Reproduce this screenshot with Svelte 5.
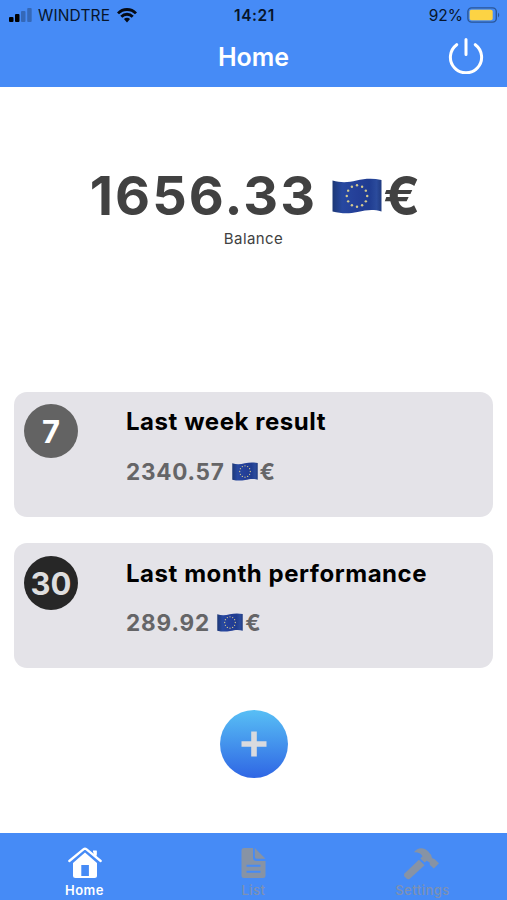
<script lang="ts">
	interface IResult {
		badge: string;
		title: string;
		amount: string;
		dark: boolean;
	}

	const balance = '1656.33';
	const results: IResult[] = [
		{ badge: '7', title: 'Last week result', amount: '2340.57', dark: false },
		{ badge: '30', title: 'Last month performance', amount: '289.92', dark: true },
	];
	const stars = Array.from({ length: 12 }, (_, i) => ({
		x: 24.5 + 10 * Math.sin((i * Math.PI) / 6),
		y: 18 - 10.7 * Math.cos((i * Math.PI) / 6),
	}));
</script>

{#snippet flag()}
	<svg class="flag" viewBox="0 0 49 36" preserveAspectRatio="none">
		<defs>
			<linearGradient id="cloth" x1="0" y1="0" x2="1" y2="0">
				<stop offset="0" stop-color="#1d3876" />
				<stop offset="0.2" stop-color="#2748a0" />
				<stop offset="0.5" stop-color="#243f98" />
				<stop offset="0.75" stop-color="#1f3c90" />
				<stop offset="0.9" stop-color="#2b4b9c" />
				<stop offset="1" stop-color="#203b80" />
			</linearGradient>
		</defs>
		<path
			d="M0.500 2.500C9 5 16 4.500 24 2.500S40 0 48.500 2V33.500C40 31 34 32 25 34S9 35.500 0.500 33.500Z"
			fill="url(#cloth)"
		/>
		{#each stars as star}
			<circle cx={star.x} cy={star.y} r="1.2" fill="#d3c98e" />
		{/each}
	</svg>
{/snippet}

<div class="app">
	<header>
		<div class="status">
			<div class="carrier">
				<svg class="signal" width="23" height="14" viewBox="0 0 23 14">
					<rect x="0" y="9" width="4.500" height="5" rx="1" />
					<rect x="6" y="6" width="4.500" height="8" rx="1" />
					<rect x="12" y="3" width="4.500" height="11" rx="1" opacity="0.25" />
					<rect x="18.200" y="0" width="4.500" height="14" rx="1" opacity="0.25" />
				</svg>
				<span>WINDTRE</span>
				<svg class="wifi" width="20" height="15" viewBox="0 0 20 15">
					<g fill="none" stroke="#050a14" stroke-width="2.800">
						<path d="M1 5.400C6 .2 14 .2 19 5.400" />
						<path d="M4.300 8.800C7.500 5.400 12.500 5.400 15.700 8.800" />
					</g>
					<path d="M6.900 11.100Q10 8.400 13.100 11.100L10 14.500Z" fill="#050a14" />
				</svg>
			</div>
			<span class="time">14:21</span>
			<div class="battery">
				<span>92%</span>
				<svg width="33" height="16" viewBox="0 0 33 16">
					<rect x="0.900" y="0.900" width="28.400" height="14.200" rx="3.700" fill="none" stroke="#2a5697" stroke-width="1.400" />
					<rect x="2.700" y="2.700" width="23" height="10.600" rx="1.800" fill="#fcd344" />
					<path d="M31 5.500Q33.500 8 31 10.500Z" fill="#2a5697" />
				</svg>
			</div>
		</div>
		<div class="title">
			<h1>Home</h1>
			<button class="power" aria-label="Log out">
				<svg width="36" height="36" viewBox="0 0 36 36">
					<path
						d="M8.700 6.700A15.600 15.600 0 1 0 27.300 6.700M18 1.500V16.500"
						fill="none"
						stroke="#fff"
						stroke-width="3"
						stroke-linecap="round"
					/>
				</svg>
			</button>
		</div>
	</header>

	<main>
		<section class="balance">
			<div class="total">
				<span>{balance}</span>{@render flag()}<span class="euro">€</span>
			</div>
			<p>Balance</p>
		</section>

		{#each results as result}
			<div class="card" class:dark={result.dark}>
				<div class="badge">{result.badge}</div>
				<div class="content">
					<h2>{result.title}</h2>
					<div class="amount">
						<span>{result.amount}</span>{@render flag()}<span class="euro">€</span>
					</div>
				</div>
			</div>
		{/each}

		<button class="add" aria-label="Add">
			<svg width="26" height="26" viewBox="0 0 26 26">
				<path d="M13 0.500V25.500M0.500 13H25.500" stroke="#d9dade" stroke-width="5.600" />
			</svg>
		</button>
	</main>

	<nav>
		<div class="tab active">
			<svg width="36" height="32" viewBox="0 0 36 32">
				<path d="M6 16L18 5.500L30 16V28.500Q30 31 27.500 31H8.500Q6 31 6 28.500Z" fill="#fff" />
				<path d="M26 3.500H29.700V12L26 9Z" fill="#fff" />
				<path
					d="M2.300 14.500L16.700 2.200Q18 1.200 19.300 2.200L33.700 14.500"
					fill="none"
					stroke="#468bf6"
					stroke-width="4.600"
				/>
				<path
					d="M2.300 14L16.700 2.200Q18 1.200 19.300 2.200L33.700 14"
					fill="none"
					stroke="#fff"
					stroke-width="2.300"
					stroke-linecap="round"
				/>
				<path d="M26.500 4H29.500V10L26.500 8Z" fill="#fff" />
				<rect x="14.300" y="18" width="7.600" height="11" fill="#468bf6" />
			</svg>
			<span>Home</span>
		</div>
		<div class="tab">
			<svg width="36" height="32" viewBox="0 0 36 32">
				<path d="M8 1H17V10.500Q17 14 20.500 14H29.500V28.500Q29.500 31 27 31H8Q5.500 31 5.500 28.500V3.500Q5.500 1 8 1Z" />
				<path d="M18.800 1L29.500 11.700H21Q18.800 11.700 18.800 9.500Z" />
				<path d="M10.500 18.700H24.500M10.500 24.700H24.500" stroke="#468bf6" stroke-width="2" />
			</svg>
			<span>List</span>
		</div>
		<div class="tab">
			<svg class="hammer" width="36" height="32" viewBox="0 0 36 32">
				<path d="M11 5.200C14.500 .2 21 .2 25 4.300L28.200 8Q28.500 10.500 29.300 11.200L31.500 12L36 16.300L30.800 21.500L26.700 17.700V15.400L23.700 13.800L21.700 15.500L17.300 11.400L19.500 9.200Q17 4.800 11 5.200Z" />
				<path d="M15.900 12.800L21.500 18.300L6.800 31.700Q5 33 3.500 31.500L1.500 29.500Q.2 28 1.500 26.500Z" />
			</svg>
			<span>Settings</span>
		</div>
	</nav>
</div>

<style>
	:global(body) {
		margin: 0;
		background-color: #fff;
	}
	.app {
		display: flex;
		flex-direction: column;
		width: 507px;
		height: 900px;
		overflow: hidden;
		font-family: Inter, 'Liberation Sans', sans-serif;
	}
	header {
		height: 87px;
		background-color: #468bf6;
	}
	.status {
		display: grid;
		grid-template-columns: 1fr auto 1fr;
		align-items: center;
		height: 30px;
		padding: 0 7px 0 9px;
		color: #07152b;
		font-size: 15.5px;
		line-height: 28px;
	}
	.status span {
		padding-top: 1px;
	}
	.carrier {
		display: flex;
		align-items: center;
	}
	.carrier span {
		margin: 0 7px 0 6px;
		letter-spacing: 0.15px;
	}
	.time {
		font-weight: 600;
		letter-spacing: 0.6px;
	}
	.battery {
		display: flex;
		justify-content: flex-end;
		align-items: center;
		gap: 4px;
	}
	.title {
		display: grid;
		grid-template-columns: 1fr auto 1fr;
		align-items: center;
		height: 53px;
		padding: 0 23px;
		color: #fff;
	}
	h1 {
		grid-column: 2;
		margin: 0;
		font-size: 25px;
		font-weight: 600;
	}
	button {
		display: flex;
		justify-content: center;
		align-items: center;
		padding: 0;
		border: none;
		background: none;
	}
	.power {
		justify-self: end;
		margin-bottom: 1px;
	}
	main {
		display: flex;
		flex-direction: column;
		align-items: center;
		flex: 1;
	}
	.balance {
		height: 305px;
		padding-top: 75px;
		box-sizing: border-box;
		color: #414141;
	}
	.total {
		display: flex;
		justify-content: center;
		align-items: center;
		height: 66px;
		padding: 1px 0 0 5px;
		box-sizing: border-box;
		font-size: 54px;
		font-weight: 700;
		letter-spacing: 2.1px;
	}
	.total .flag {
		width: 50px;
		height: 36px;
		margin: 0 1px 0 15px;
	}
	.balance p {
		margin: 2px 0 0;
		font-size: 15px;
		line-height: 18px;
		letter-spacing: 0.4px;
		text-align: center;
	}
	.card {
		display: grid;
		grid-template-columns: 54px auto;
		column-gap: 48px;
		width: 479px;
		height: 125px;
		margin-bottom: 26px;
		padding: 12px 10px;
		box-sizing: border-box;
		border-radius: 13px;
		background-color: #e4e3e8;
	}
	.badge {
		display: flex;
		justify-content: center;
		align-items: center;
		width: 54px;
		height: 54px;
		border-radius: 50%;
		background-color: #636363;
		color: #fff;
		font-size: 31px;
		font-weight: 700;
	}
	.dark .badge {
		margin-top: 1px;
		background-color: #272727;
		color: #dededf;
	}
	h2 {
		margin: 3px 0 0;
		color: #000;
		font-size: 24px;
		line-height: 30px;
		font-weight: 700;
		letter-spacing: 0.55px;
		white-space: nowrap;
	}
	.dark h2 {
		margin-top: 4px;
	}
	.amount {
		display: flex;
		align-items: center;
		height: 30px;
		margin-top: 19px;
		color: #656567;
		font-size: 22.5px;
		font-weight: 700;
		letter-spacing: 0.75px;
	}
	.dark .amount {
		margin-top: 18px;
		letter-spacing: 0.9px;
	}
	.amount .flag {
		width: 26px;
		height: 19px;
		margin: 0 2px 0 7px;
	}
	.add {
		width: 68px;
		height: 68px;
		margin-top: 16px;
		border-radius: 50%;
		background: linear-gradient(#58bff5, #2f66e4);
	}
	nav {
		display: grid;
		grid-template-columns: repeat(3, 1fr);
		height: 67px;
		background-color: #468bf6;
	}
	.tab {
		display: flex;
		flex-direction: column;
		align-items: center;
		padding-top: 14px;
		color: #7e91b2;
		fill: #8793a5;
		font-size: 13px;
		line-height: 16px;
		font-weight: 500;
		letter-spacing: 0.5px;
	}
	.tab svg {
		overflow: visible;
		margin-bottom: 3px;
	}
	.tab .hammer {
		margin-right: 3px;
	}
	.tab.active {
		color: #fff;
		font-weight: 600;
	}
</style>
